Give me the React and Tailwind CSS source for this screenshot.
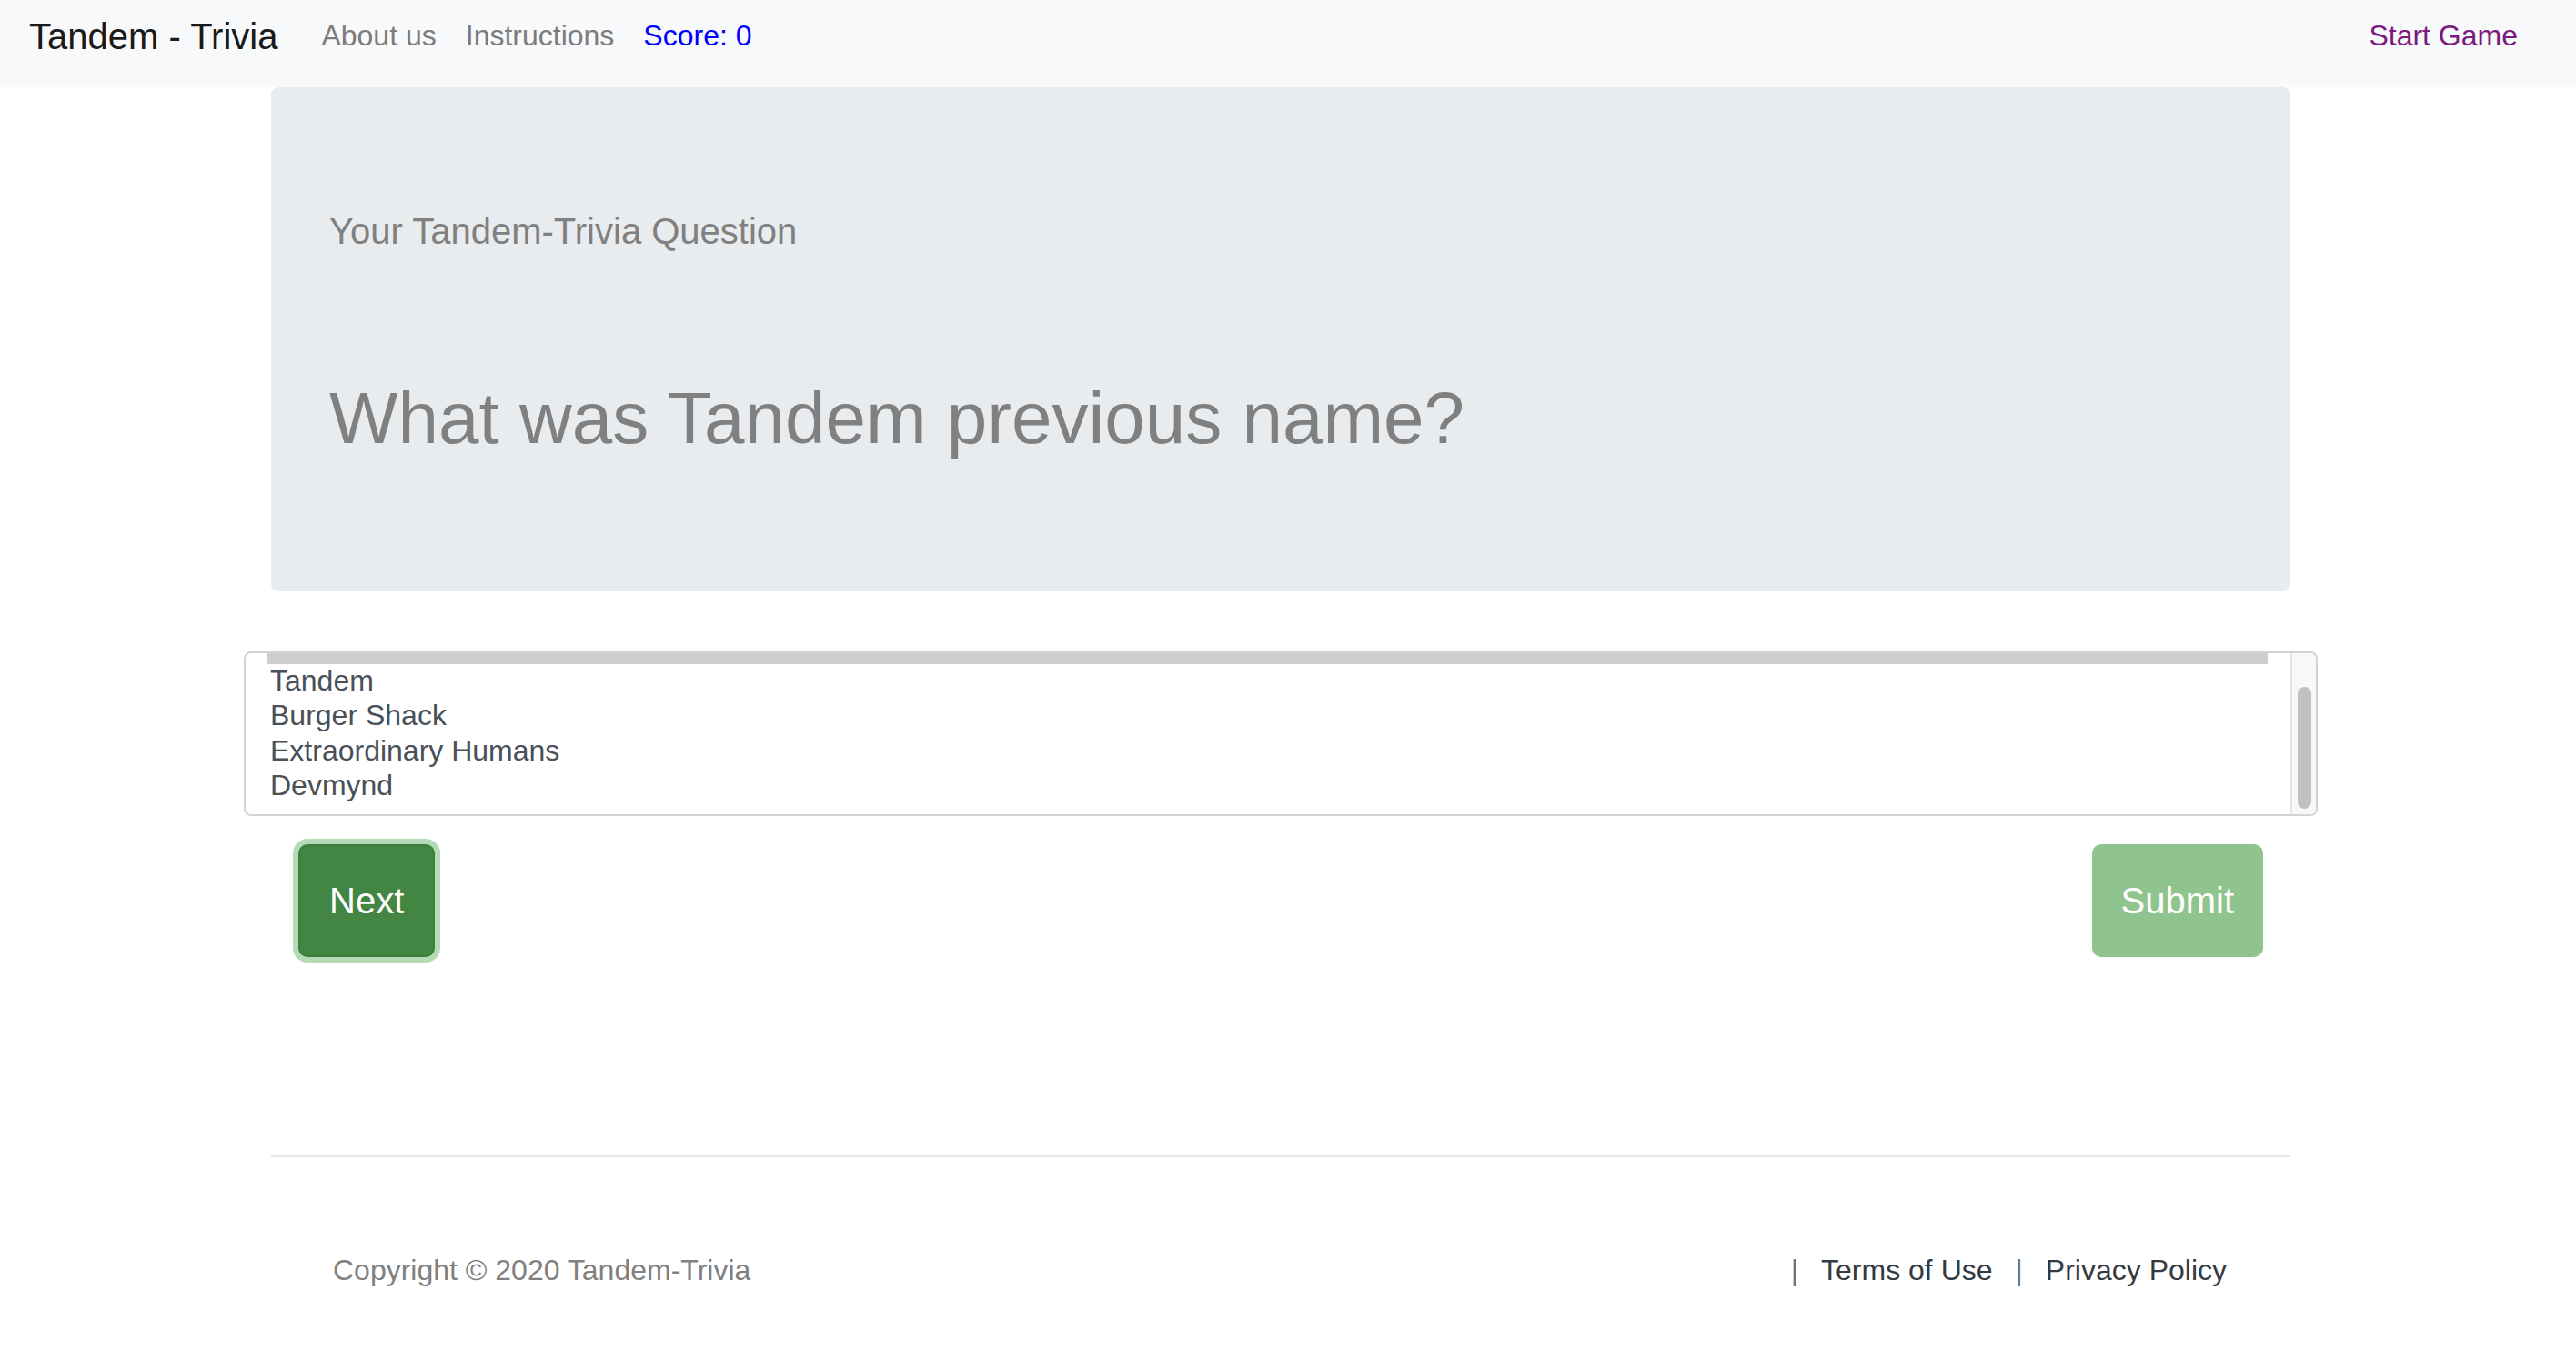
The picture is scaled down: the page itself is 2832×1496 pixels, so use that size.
import React from 'react'

const answers = ['Tandem', 'Burger Shack', 'Extraordinary Humans', 'Devmynd']

function Navbar() {
  return (
    <nav className="h-[96px] bg-[#f8f9fa] pl-8 pr-[48px] pt-[10px] flex items-start justify-between">
      <div className="flex items-start">
        <span className="text-[40px] leading-[60px] text-[#1a1a1a] mr-8">Tandem - Trivia</span>
        <div className="flex mt-[5px] text-[32px] leading-[48px]">
          <span className="px-4 text-[#7c7c7d]">About us</span>
          <span className="px-4 text-[#7c7c7d]">Instructions</span>
          <span className="px-4 text-[#0000ff]">Score: 0</span>
        </div>
      </div>
      <span className="mt-[5px] px-4 text-[32px] leading-[48px] text-[#7d1a80]">Start Game</span>
    </nav>
  )
}

function AnswerList() {
  return (
    <div className="flex h-[181px] border-2 border-[#ced4da] rounded-[8px] overflow-hidden bg-white">
      <div className="flex-1 pl-6 pr-[25px] overflow-hidden">
        <div className="h-[12px] bg-[#cecece]" />
        <div className="-mt-px">
          {answers.map(a => (
            <div key={a} className="pl-[3px] text-[32px] leading-[38.4px] text-[#495057]">{a}</div>
          ))}
        </div>
      </div>
      {/* scrollbar */}
      <div className="w-[28px] border-l-2 border-[#e5e5e5] bg-[#f8f8f8] pt-[37px] flex justify-center">
        <div className="w-[15px] h-[134px] rounded-full bg-[#c1c1c1]" />
      </div>
    </div>
  )
}

export default function App() {
  return (
    <div className="w-full min-h-[1496px] bg-white" style={{ fontFamily: '"Liberation Sans", Arial, sans-serif' }}>
      <Navbar />

      <div className="w-[2816px]">
        <div className="mx-auto w-[2280px]">
          {/* Question card */}
          <div className="mx-[30px] bg-[#e9ecef] rounded-[8px] px-16 pt-[134px] pb-[142px] text-[#808080]">
            <p className="text-[40px] leading-[48px]">Your Tandem-Trivia Question</p>
            <h1 className="mt-[134px] text-[80px] leading-[96px]">What was Tandem previous name?</h1>
          </div>

          <div className="mt-[66px]">
            <AnswerList />
          </div>

          <div className="mt-[31px] px-[60px] flex justify-between">
            <button className="h-[124px] px-8 rounded-[10px] border-2 border-[#3d7d3e] bg-[#438644] text-white text-[40px] leading-[60px] shadow-[0_0_0_6px_#b5dbb6]">
              Next
            </button>
            <button className="h-[124px] px-8 rounded-[10px] bg-[#8fc48f] text-white text-[40px] leading-[60px]">
              Submit
            </button>
          </div>

          {/* Footer */}
          <div className="mx-[30px] mt-[218px] h-[2px] bg-[#e6e6e6]" />
          <footer className="mt-[100px] pl-[98px] pr-[100px] flex justify-between text-[32px] leading-[48px]">
            <span className="text-[#808080]">Copyright © 2020 Tandem-Trivia</span>
            <div className="flex gap-[25px]">
              <span className="text-[#6c757d]">|</span>
              <span className="text-[#343a40]">Terms of Use</span>
              <span className="text-[#6c757d]">|</span>
              <span className="text-[#343a40]">Privacy Policy</span>
            </div>
          </footer>
        </div>
      </div>
    </div>
  )
}
